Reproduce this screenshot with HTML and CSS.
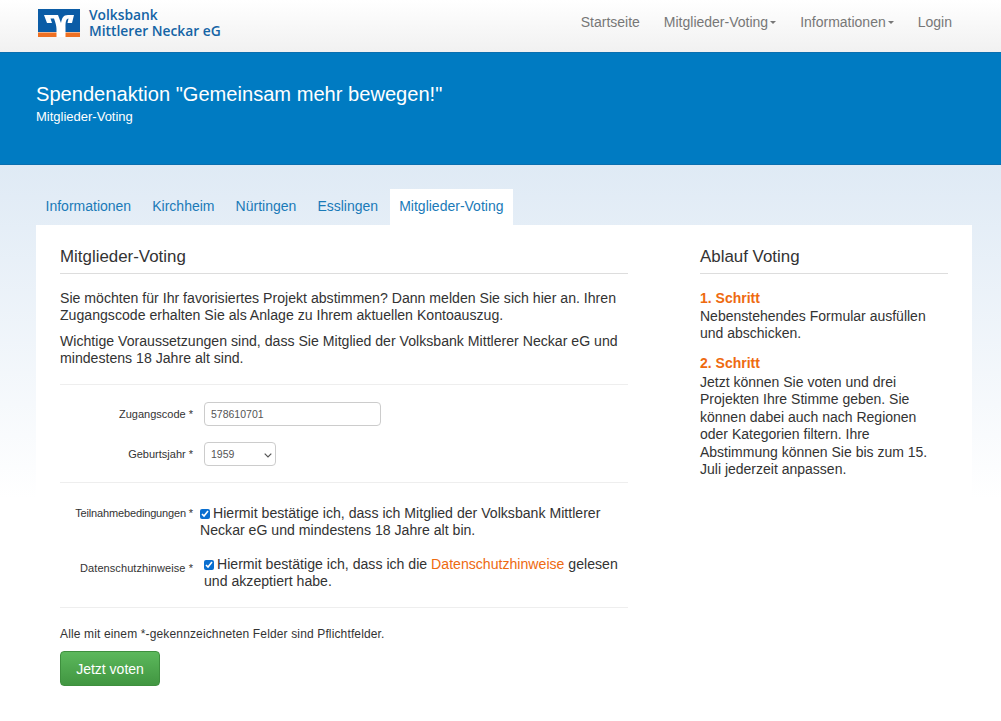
FILE: index.html
```html
<!DOCTYPE html>
<html lang="de">
<head>
  <meta charset="UTF-8"/>
  <meta name="viewport" content="width=device-width, initial-scale=1"/>
  <title>Mitglieder-Voting</title>
  <link rel="stylesheet" href="styles.css">
</head>
<body>

  <!-- Navbar -->
  <nav class="navbar">
    <a class="brand" href="#">
      <svg class="brand-logo" width="42" height="28" viewBox="0 0 42 28">
        <rect width="42" height="23" fill="#0b5ca6"/>
        <rect width="42" height="4.5" y="23.5" fill="#ee7023"/>
        <path d="M6 6H20L23 14C24 9 25 6 30 6H36L34 14H29.5L30.5 9.5C28 10 27.5 13 27.5 18V28H18.5V20C18.5 17 17.5 14 16 9.5H12.5L14 14H9Z" fill="#fff"/>
      </svg>
      <span class="brand-text">Volksbank<br>Mittlerer Neckar eG</span>
    </a>
    <ul class="nav-links">
      <li><a href="#">Startseite</a></li>
      <li><a href="#">Mitglieder-Voting<span class="caret"></span></a></li>
      <li><a href="#">Informationen<span class="caret"></span></a></li>
      <li><a href="#">Login</a></li>
    </ul>
  </nav>

  <!-- Hero -->
  <header class="hero">
    <h1>Spendenaktion "Gemeinsam mehr bewegen!"</h1>
    <p>Mitglieder-Voting</p>
  </header>

  <main class="page">
    <ul class="tabs">
      <li><a href="#">Informationen</a></li>
      <li><a href="#">Kirchheim</a></li>
      <li><a href="#">Nürtingen</a></li>
      <li><a href="#">Esslingen</a></li>
      <li class="active"><a href="#">Mitglieder-Voting</a></li>
    </ul>

    <div class="card">
      <section class="col-main">
        <h2>Mitglieder-Voting</h2>
        <p>Sie möchten für Ihr favorisiertes Projekt abstimmen? Dann melden Sie sich hier an. Ihren Zugangscode erhalten Sie als Anlage zu Ihrem aktuellen Kontoauszug.</p>
        <p>Wichtige Voraussetzungen sind, dass Sie Mitglied der Volksbank Mittlerer Neckar eG und mindestens 18 Jahre alt sind.</p>
        <hr class="rule-intro">

        <form>
          <div class="form-row">
            <label class="field-label" for="code">Zugangscode *</label>
            <input class="input-code" id="code" type="text" value="578610701">
          </div>
          <div class="form-row">
            <label class="field-label" for="year">Geburtsjahr *</label>
            <span class="select-wrap">
              <select class="input-year" id="year"><option>1959</option></select>
              <svg class="select-arrow" width="8" height="5" viewBox="0 0 8 5"><path d="M0.7 0.7L4 4L7.3 0.7" fill="none" stroke="#555" stroke-width="1.2"/></svg>
            </span>
          </div>
          <hr class="rule-fields">

          <div class="check-row">
            <span class="check-label check-label-terms">Teilnahmebedingungen *</span>
            <label class="check-text"><input type="checkbox" checked>Hiermit bestätige ich, dass ich Mitglied der Volksbank Mittlerer Neckar eG und mindestens 18 Jahre alt bin.</label>
          </div>
          <div class="check-row check-row-2">
            <span class="check-label check-label-privacy">Datenschutzhinweise *</span>
            <label class="check-text"><input type="checkbox" checked>Hiermit bestätige ich, dass ich die <a href="#">Datenschutzhinweise</a> gelesen und akzeptiert habe.</label>
          </div>
          <hr class="rule-checks">

          <p class="required-note">Alle mit einem *-gekennzeichneten Felder sind Pflichtfelder.</p>
          <button class="btn-vote" type="button">Jetzt voten</button>
        </form>
      </section>

      <aside class="col-side">
        <h2>Ablauf Voting</h2>
        <h3>1. Schritt</h3>
        <p>Nebenstehendes Formular ausfüllen und abschicken.</p>
        <h3>2. Schritt</h3>
        <p class="step-two">Jetzt können Sie voten und drei Projekten Ihre Stimme geben. Sie können dabei auch nach Regionen oder Kategorien filtern. Ihre Abstimmung können Sie bis zum 15. Juli jederzeit anpassen.</p>
      </aside>
    </div>
  </main>

</body>
</html>
```

FILE: styles.css
```css
* { box-sizing: border-box; }
body {
  margin: 0;
  font-family: "Liberation Sans", Arial, sans-serif;
  font-size: 14.12px;
  line-height: 17px;
  color: #333;
  background: #fff;
}
a { text-decoration: none; }

/* Navbar */
.navbar {
  height: 52px;
  display: flex;
  justify-content: space-between;
  align-items: center;
  padding: 0 49px 0 38px;
  background: linear-gradient(to bottom, #fff, #f1f1f1);
}
.brand { display: flex; align-items: center; gap: 9px; margin-top: -6px; }
.brand-logo { display: block; }
.brand-text {
  font-family: "Open Sans", sans-serif;
  font-weight: 600;
  font-size: 13.8px;
  line-height: 16px;
  color: #1464a5;
}
.nav-links { display: flex; gap: 24px; list-style: none; margin: -8px 0 0; padding: 0; }
.nav-links a { color: #777; font-size: 14px; }
.caret {
  display: inline-block;
  margin-left: 2px;
  vertical-align: middle;
  border-top: 3px solid #777;
  border-left: 3px solid transparent;
  border-right: 3px solid transparent;
}

/* Hero */
.hero {
  height: 113px;
  padding: 28px 36px 0;
  background: #007bc2;
  border-top: 1px solid #0a6fb0;
  border-bottom: 1px solid #0a6fb0;
  color: #fff;
}
.hero h1 { margin: 0; font-size: 20.1px; line-height: 26px; font-weight: 400; }
.hero p { margin: 1px 0 0; font-size: 13px; line-height: 17px; }

/* Page body */
.page {
  height: 556px;
  padding: 24px 29px 0 36px;
  background: linear-gradient(to bottom, #dfeaf5, #fff 60%);
}
.tabs { display: flex; list-style: none; margin: 0; padding: 0; }
.tabs a { display: block; height: 36px; padding: 9px 9.55px 0; font-size: 14px; color: #1a7ab8; }
.tabs li { margin-right: 2px; }
.tabs .active a { background: #fff; }
.card {
  display: flex;
  justify-content: space-between;
  padding: 21px 24px 0;
  height: 495px;
  background: #fff;
}
.col-main { width: 568px; }
.col-side { width: 248px; }
h2 {
  margin: 0 0 16px;
  padding-bottom: 6px;
  font-size: 16.9px;
  line-height: 21px;
  font-weight: 400;
  color: #333;
  border-bottom: 1px solid #ddd;
}
p { margin: 0 0 9px; }
hr { border: 0; border-top: 1px solid #eee; margin: 0; }
.rule-intro { margin: 17px 0 17px; }
.rule-fields { margin: 16px 0 22px; }
.rule-checks { margin: 17px 0 18px; }

/* Form */
.form-row { display: flex; align-items: center; gap: 11px; margin-bottom: 16px; }
.form-row:last-of-type { margin-bottom: 0; }
.field-label { width: 133px; text-align: right; font-size: 11px; }
.input-code, .input-year {
  height: 24px;
  padding: 0 6px;
  font-family: inherit;
  font-size: 10.5px;
  color: #555;
  background: #fff;
  border: 1px solid #ccc;
  border-radius: 4px;
}
.input-code { width: 177px; }
.input-year { display: block; width: 72px; appearance: none; }
.select-wrap { position: relative; }
.select-arrow { position: absolute; right: 4px; top: 11px; pointer-events: none; }
.check-row { display: flex; gap: 7px; }
.check-row-2 { margin-top: 17px; gap: 11px; }
.check-label { flex: none; width: 133px; text-align: right; font-size: 11px; }
.check-label-terms { letter-spacing: -0.15px; }
.check-label-privacy { padding-top: 4px; letter-spacing: 0.08px; }
.check-text { flex: 1; }
.check-text input { width: 10px; height: 10px; margin: 0 3px 0 0; vertical-align: -1px; accent-color: #0a6fd0; }
.check-text a { color: #ee6a10; }
.required-note { font-size: 12px; letter-spacing: 0.14px; margin-bottom: 8px; }
.btn-vote {
  width: 100px;
  height: 35px;
  font-family: inherit;
  font-size: 14px;
  color: #fff;
  background: linear-gradient(to bottom, #5cb85c, #419641);
  border: 1px solid #3e8f3e;
  border-radius: 4px;
}

/* Sidebar */
.col-side { font-size: 14px; line-height: 17.5px; }
.col-side h2 { line-height: 21px; margin-bottom: 16px; }
.col-side h3 { margin: 0; font-size: 14px; line-height: 17.5px; font-weight: 700; color: #ee6a10; }
.col-side p { margin-bottom: 12px; }
.col-side .step-two { margin-top: 1.5px; }
```
